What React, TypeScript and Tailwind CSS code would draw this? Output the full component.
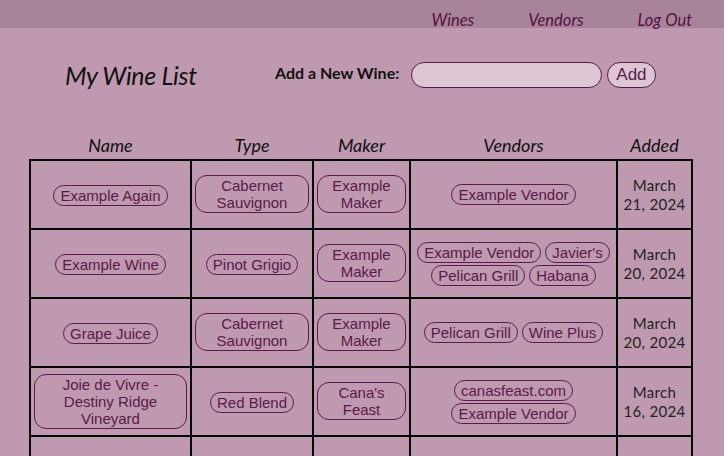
import React from "react";

type Wine = {
  name: string;
  type: string;
  maker: string;
  vendors: string[];
  added: [string, string];
};

const wines: Wine[] = [
  { name: "Example Again", type: "Cabernet Sauvignon", maker: "Example Maker", vendors: ["Example Vendor"], added: ["March", "21, 2024"] },
  { name: "Example Wine", type: "Pinot Grigio", maker: "Example Maker", vendors: ["Example Vendor", "Javier's", "Pelican Grill", "Habana"], added: ["March", "20, 2024"] },
  { name: "Grape Juice", type: "Cabernet Sauvignon", maker: "Example Maker", vendors: ["Pelican Grill", "Wine Plus"], added: ["March", "20, 2024"] },
  { name: "Joie de Vivre - Destiny Ridge Vineyard", type: "Red Blend", maker: "Cana's Feast", vendors: ["canasfeast.com", "Example Vendor"], added: ["March", "16, 2024"] },
];

const hand = "font-['Lato','Open_Sans',sans-serif] italic";

const Pill = ({ children }: { children: React.ReactNode }) => (
  <span className="inline-block border-[1.5px] border-[#5b1a47] rounded-[12px] px-[6px] py-[1px] text-[15px] leading-[17px] text-[#5b1a47] font-['Liberation_Sans',Arial,sans-serif]">
    {children}
  </span>
);

export default function App() {
  return (
    <div className="w-[724px] h-[456px] overflow-hidden bg-[#bf99b0]">
      {/* Nav */}
      <nav className={`relative z-10 h-[28px] bg-[#a8849a] flex items-start justify-end pt-[11px] pr-[32px] gap-[54px] text-[16.5px] leading-[18px] text-[#561040] ${hand}`}>
        <a>Wines</a>
        <a>Vendors</a>
        <a>Log Out</a>
      </nav>

      {/* Title + form */}
      <div className="h-[102px] flex items-start pt-[32px]">
        <h1 className={`ml-[65px] w-[210px] text-[25px] leading-[30px] tracking-[-0.3px] text-[#111] ${hand}`}>
          My Wine List
        </h1>
        <div className="flex items-center mt-[2px]">
          <label className="text-[16px] font-bold text-[#111] font-['Lato',sans-serif] -mt-[5px]">
            Add a New Wine:
          </label>
          <input className="ml-[12px] w-[191px] h-[26px] rounded-full border-[1.5px] border-[#5b1a47] bg-[#dcc6d3]" />
          <button className="ml-[5px] h-[26px] px-[8px] rounded-full border-[1.5px] border-[#5b1a47] bg-[#dcc6d3] text-[17px] leading-[20px] text-[#5b1a47] font-['Liberation_Sans',Arial,sans-serif]">
            Add
          </button>
        </div>
      </div>

      {/* Table */}
      <table className="ml-[29px] w-[662px] table-fixed border-collapse">
        <colgroup>
          <col className="w-[161px]" />
          <col className="w-[122px]" />
          <col className="w-[97px]" />
          <col className="w-[207px]" />
          <col className="w-[75px]" />
        </colgroup>
        <thead>
          <tr className={`text-[18px] leading-[26px] text-[#111] ${hand}`}>
            <th className="font-normal h-[30px] align-bottom pb-[1px]">Name</th>
            <th className="font-normal align-bottom pb-[1px]">Type</th>
            <th className="font-normal align-bottom pb-[1px]">Maker</th>
            <th className="font-normal align-bottom pb-[1px]">Vendors</th>
            <th className="font-normal align-bottom pb-[1px]">Added</th>
          </tr>
        </thead>
        <tbody>
          {wines.map((w) => (
            <tr key={w.name} className="h-[69px]">
              <td className="border-2 border-black text-center px-[3px]">
                <Pill>{w.name}</Pill>
              </td>
              <td className="border-2 border-black text-center px-[3px]">
                <Pill>{w.type}</Pill>
              </td>
              <td className="border-2 border-black text-center px-[3px]">
                <Pill>{w.maker}</Pill>
              </td>
              <td className="border-2 border-black px-[4px]">
                <div className="flex flex-wrap justify-center gap-x-[4px] gap-y-[2px]">
                  {w.vendors.map((v) => (
                    <Pill key={v}>{v}</Pill>
                  ))}
                </div>
              </td>
              <td className="border-2 border-black text-center text-[15px] leading-[19px] text-[#222] font-['Lato',sans-serif] tracking-[0.3px]">
                {w.added[0]}
                <br />
                {w.added[1]}
              </td>
            </tr>
          ))}
          {/* next row, below the fold */}
          <tr className="h-[69px]">
            <td className="border-2 border-black" />
            <td className="border-2 border-black" />
            <td className="border-2 border-black" />
            <td className="border-2 border-black" />
            <td className="border-2 border-black" />
          </tr>
        </tbody>
      </table>
    </div>
  );
}
